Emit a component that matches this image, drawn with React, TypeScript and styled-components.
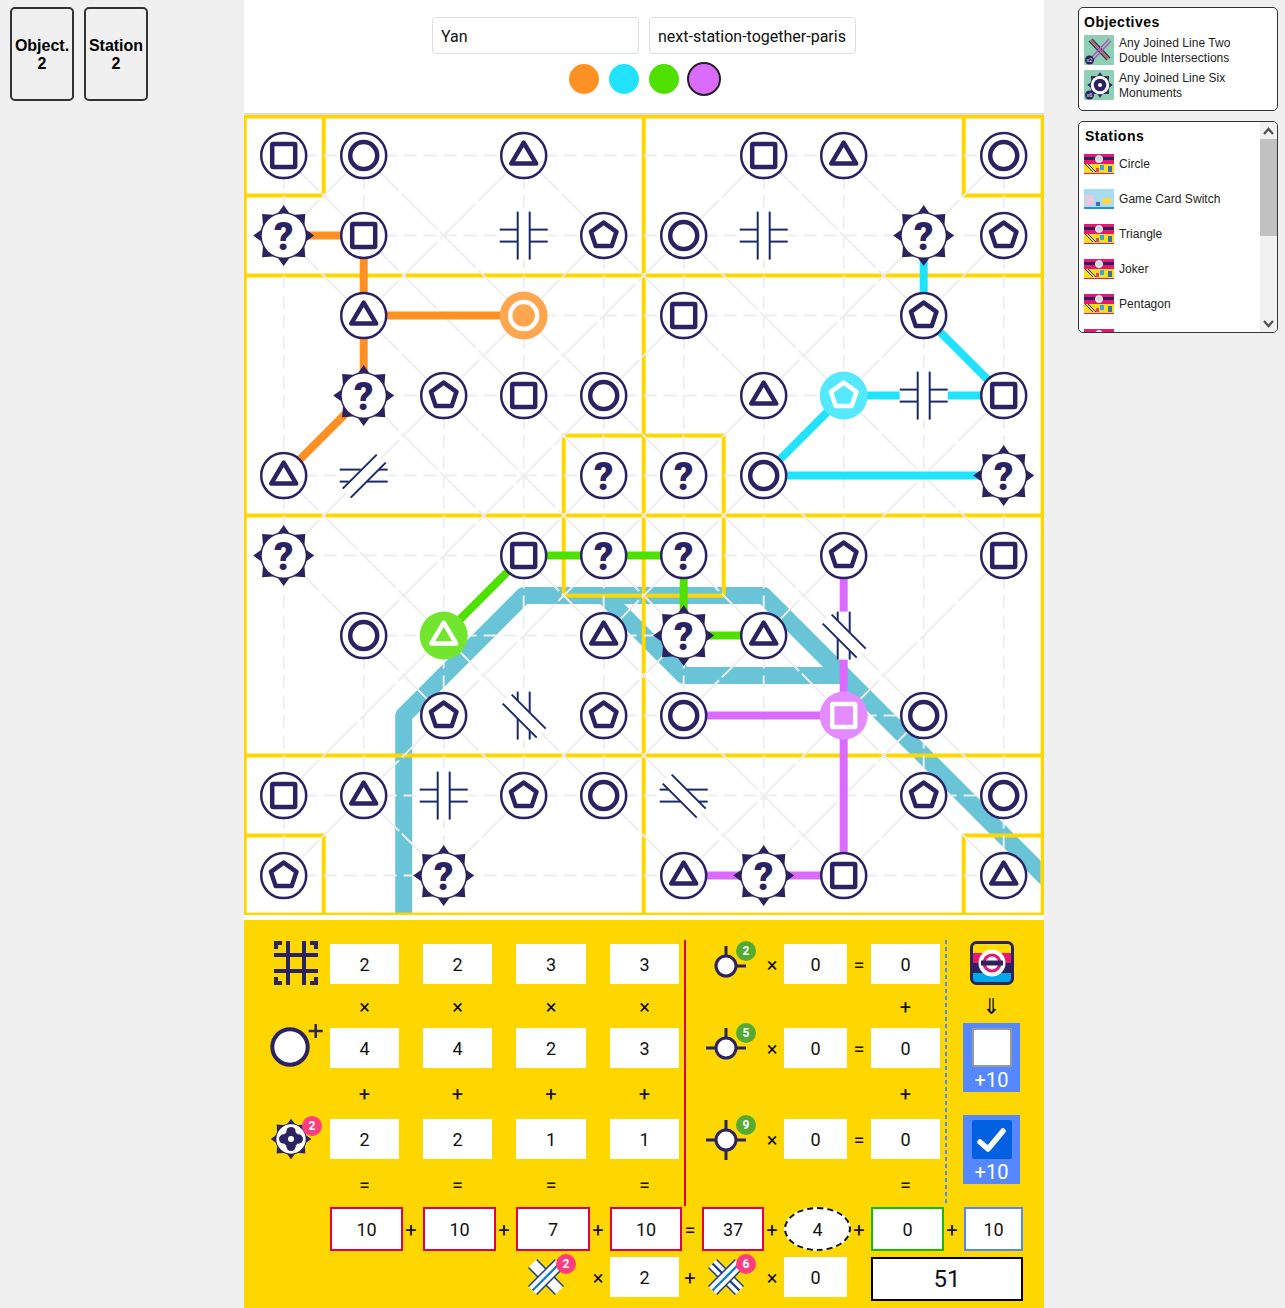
import React from "react";
import styled, { createGlobalStyle } from "styled-components";

const NAVY = "#2a2261";
const ICON_BLUE = "#1c2a6b";

const GlobalStyle = createGlobalStyle`
  html, body {
    margin: 0;
    padding: 0;
    background: #f0f0f0;
  }
`;

const Page = styled.div`
  display: flex;
  align-items: flex-start;
  width: 1285px;
  height: 1308px;
  overflow: hidden;
`;

const LeftCol = styled.div`
  width: 244px;
  box-sizing: border-box;
  padding: 7px 0 0 10px;
  display: flex;
  gap: 10px;
`;

const SideCard = styled.div`
  width: 64px;
  height: 94px;
  box-sizing: border-box;
  border: 2px solid #333;
  border-radius: 5px;
  padding-top: 2px;
  display: flex;
  align-items: center;
  justify-content: center;
  text-align: center;
  font: bold 16px/18px "Liberation Sans", Arial, sans-serif;
  color: #000;
`;

const Center = styled.div`
  width: 800px;
  background: #fff;
`;

const Header = styled.div`
  height: 115px;
  box-sizing: border-box;
  border-bottom: 2px solid #ddd;
  padding-top: 17px;
  display: flex;
  flex-direction: column;
  align-items: center;
`;

const InputRow = styled.div`
  display: flex;
  gap: 10px;
`;

const NameInput = styled.input`
  width: 207px;
  height: 37px;
  box-sizing: border-box;
  border: 1px solid #ddd;
  border-radius: 4px;
  padding: 2px 8px 0;
  font: 16px Roboto, sans-serif;
  color: #111;
  background: #fff;
  outline: none;
`;

const DotRow = styled.div`
  display: flex;
  align-items: center;
  gap: 10px;
  margin: 8px 0 0 2px;
`;

const Dot = styled.div<{ $color: string; $active?: boolean }>`
  width: 30px;
  height: 30px;
  box-sizing: content-box;
  border-radius: 50%;
  background: ${(p) => p.$color};
  border: ${(p) => (p.$active ? "2px solid #222" : "none")};
  margin-left: ${(p) => (p.$active ? "-2px" : "0")};
`;

const BoardSvg = styled.svg`
  display: block;
  width: 800px;
  height: 800px;
`;

const ScoreSheet = styled.div`
  margin-top: 5px;
  height: 388px;
  box-sizing: border-box;
  padding-top: 24px;
  background: #ffd700;
  display: grid;
  grid-template-columns: 86px 73px 20px 73px 20px 74px 20px 72px 20px 62px 20px 67px 20px 73px 20px 59px 21px;
  grid-template-rows: 40px 44px 40px 51px 40px 48px 44px 6px 40px;
  font-family: Roboto, sans-serif;
`;

const Place = styled.div<{ $c: number; $r: number }>`
  grid-column: ${(p) => p.$c};
  grid-row: ${(p) => p.$r};
`;

const ScoreInput = styled.input<{ $c: number; $r: number; $w?: number }>`
  grid-column: ${(p) => p.$c};
  grid-row: ${(p) => p.$r};
  width: ${(p) => p.$w ?? 69}px;
  height: 40px;
  box-sizing: border-box;
  border: none;
  padding: 0;
  background: #fff;
  text-align: center;
  font: 18px Roboto, sans-serif;
  color: #111;
  outline: none;
`;

const Op = styled(Place)<{ $w?: number }>`
  box-sizing: border-box;
  width: ${(p) => (p.$w ? `${p.$w}px` : "auto")};
  padding: ${(p) => (p.$r === 6 ? 4 : 1)}px ${(p) => (p.$w ? 0 : 4)}px 0 0;
  display: flex;
  align-items: center;
  justify-content: center;
  font: 20px Roboto, sans-serif;
  color: #111;
`;

const TotalBox = styled(Place)<{ $border: string }>`
  box-sizing: border-box;
  height: 44px;
  border: 2px solid ${(p) => p.$border};
  background: #fff;
  display: flex;
  align-items: center;
  justify-content: center;
  font-size: 18px;
  color: #111;
`;

const OvalBox = styled(Place)`
  box-sizing: border-box;
  height: 44px;
  border: 2px dashed #111;
  border-radius: 50%;
  background: #fff;
  display: flex;
  align-items: center;
  justify-content: center;
  font-size: 18px;
  color: #111;
`;

const GrandTotal = styled.div`
  grid-column: 14 / 17;
  grid-row: 9;
  box-sizing: border-box;
  height: 44px;
  border: 2px solid #000;
  background: #fff;
  display: flex;
  align-items: center;
  justify-content: center;
  font-size: 24px;
  color: #111;
`;

const IconSlot = styled(Place)<{ $ml: number; $mt: number }>`
  position: relative;
  margin: ${(p) => p.$mt}px 0 0 ${(p) => p.$ml}px;
  width: 48px;
  height: 44px;
  align-self: start;
`;

const Badge = styled.div<{ $color: string; $top: number; $left: number }>`
  position: absolute;
  top: ${(p) => p.$top}px;
  left: ${(p) => p.$left}px;
  width: 20px;
  height: 20px;
  border-radius: 50%;
  background: ${(p) => p.$color};
  color: #fff;
  display: flex;
  align-items: center;
  justify-content: center;
  font: bold 12px Roboto, sans-serif;
`;

const RedRule = styled.div`
  grid-column: 9;
  grid-row: 1 / 7;
  width: 2px;
  margin: -4px 0 1px 2px;
  background: #e0004d;
`;

const BlueRule = styled.div`
  grid-column: 15;
  grid-row: 1 / 7;
  width: 2px;
  margin: -4px 0 1px 1px;
  background: repeating-linear-gradient(to bottom, #5588ff 0 4px, transparent 4px 7px);
`;

const BonusCol = styled.div`
  grid-column: 16;
  grid-row: 1 / 7;
  margin: -3px 0 0 -1px;
  width: 57px;
  display: flex;
  flex-direction: column;
  align-items: center;
`;

const Arrow = styled.div`
  height: 38px;
  box-sizing: border-box;
  padding-top: 5px;
  display: flex;
  align-items: center;
  font: 22px "DejaVu Sans", sans-serif;
  color: #111;
`;

const BonusBox = styled.div`
  width: 57px;
  height: 69px;
  box-sizing: border-box;
  padding-top: 5px;
  background: #5588ff;
  display: flex;
  flex-direction: column;
  align-items: center;
  color: #fff;
  font: 20px/24px Roboto, sans-serif;
  & + & {
    margin-top: 23px;
  }
`;

const Check = styled.div<{ $on?: boolean }>`
  width: 40px;
  height: 40px;
  box-sizing: border-box;
  margin-bottom: 1px;
  border-radius: 2px;
  border: 2px solid ${(p) => (p.$on ? "#0060df" : "#9a9a9a")};
  background: ${(p) => (p.$on ? "#0060df" : "#fff")};
  display: flex;
  align-items: center;
  justify-content: center;
`;

const RightCol = styled.div`
  margin-left: 34px;
  padding-top: 7px;
  width: 200px;
  display: flex;
  flex-direction: column;
  gap: 10px;
  font-family: "Liberation Sans", Arial, sans-serif;
`;

const Panel = styled.div<{ $tall?: boolean }>`
  position: relative;
  box-sizing: border-box;
  width: 200px;
  height: ${(p) => (p.$tall ? "212px" : "104px")};
  overflow: hidden;
  border: 1px solid #333;
  border-radius: 5px;
  background: #fff;
  padding: 0 5px;
  display: flex;
  flex-direction: column;
  gap: 5px;
`;

const PanelTitle = styled.div<{ $ml?: number }>`
  flex: none;
  height: 21px;
  margin: 0 0 -5px ${(p) => p.$ml ?? 0}px;
  padding-top: 6px;
  font-size: 14px;
  font-weight: bold;
  line-height: 17px;
  letter-spacing: 0.5px;
  color: #000;
`;

const PanelRow = styled.div`
  flex: none;
  height: 30px;
  display: flex;
  align-items: center;
  gap: 5px;
  font-size: 12px;
  line-height: 15px;
  letter-spacing: 0.05px;
  color: #222;
`;

const RowText = styled.span<{ $drop?: number }>`
  padding-top: ${(p) => p.$drop ?? 0}px;
`;

const ScrollTrack = styled.div`
  position: absolute;
  top: 0;
  right: 0;
  bottom: 0;
  width: 17px;
  background: #f1f1f1;
  display: flex;
  flex-direction: column;
`;

const ScrollButton = styled.div`
  flex: none;
  height: 17px;
  display: flex;
  align-items: center;
  justify-content: center;
`;

const ScrollThumb = styled.div`
  flex: none;
  height: 97px;
  background: #c1c1c1;
`;

const ScrollGap = styled.div`
  flex: 1;
`;

type Dir = "h" | "v" | "d" | "s";

const ROWS = [
  "sc.t..st.c",
  "js.HpcH.jp",
  ".t.c.s..p.",
  ".jpsc.tpHs",
  "tA..qqc..j",
  "j..sqq.p.s",
  ".ct.tjtC..",
  "..pCpc.sc.",
  "stHpcB..pc",
  "p.j..tjs.t",
];

const STARTS: Record<string, string> = {
  "3,2": "#ffa64f",
  "7,3": "#55e9ff",
  "2,6": "#72e62e",
  "7,7": "#e38bff",
};

const BLOCKED: Record<string, Dir[]> = {
  H: ["d", "s"],
  A: ["v", "d"],
  B: ["v", "s"],
  C: ["h", "s"],
};

const LINES: { color: string; nodes: [number, number][] }[] = [
  { color: "#ff9124", nodes: [[0, 1], [1, 1], [1, 2], [3, 2]] },
  { color: "#ff9124", nodes: [[1, 2], [1, 3], [0, 4]] },
  { color: "#22e3ff", nodes: [[8, 1], [8, 2], [9, 3], [7, 3], [6, 4], [9, 4]] },
  { color: "#50e000", nodes: [[2, 6], [3, 5], [5, 5], [5, 6], [6, 6]] },
  { color: "#db6bff", nodes: [[7, 5], [7, 9], [5, 9]] },
  { color: "#db6bff", nodes: [[7, 7], [5, 7]] },
];

const px = (n: number) => 40 + 80 * n;

function buildGrid() {
  const segs: { x1: number; y1: number; x2: number; y2: number; dir: Dir }[] = [];
  const walk = (cells: [number, number][], dir: Dir) => {
    let last: [number, number] | null = null;
    for (const c of cells) {
      const k = ROWS[c[1]][c[0]];
      if (k === ".") continue;
      if (BLOCKED[k]?.includes(dir)) {
        last = null;
        continue;
      }
      if (last) segs.push({ x1: px(last[0]), y1: px(last[1]), x2: px(c[0]), y2: px(c[1]), dir });
      last = c;
    }
  };
  const idx = Array.from({ length: 10 }, (_, i) => i);
  idx.forEach((n) => {
    walk(idx.map((i) => [i, n] as [number, number]), "h");
    walk(idx.map((j) => [n, j] as [number, number]), "v");
  });
  for (let d = -9; d <= 9; d++) {
    walk(idx.filter((i) => i - d >= 0 && i - d <= 9).map((i) => [i, i - d] as [number, number]), "d");
  }
  for (let s = 0; s <= 18; s++) {
    walk(idx.filter((i) => s - i >= 0 && s - i <= 9).map((i) => [i, s - i] as [number, number]), "s");
  }
  return segs;
}

// the eight spikes round a joker: axis spikes are narrower than the corner ones
function spikes() {
  const polar = (deg: number, r: number) => {
    const t = (deg * Math.PI) / 180;
    return `${(Math.cos(t) * r).toFixed(2)},${(Math.sin(t) * r).toFixed(2)}`;
  };
  return Array.from({ length: 8 }, (_, n) => {
    const a = n * 45;
    const half = n % 2 === 0 ? 18 : 24;
    return [polar(a - half, 22), polar(a, 30.5), polar(a + half, 22)].join(" ");
  });
}

const SpikeRing = () => (
  <>
    <circle r={23.5} fill={NAVY} />
    {spikes().map((pts) => (
      <polygon key={pts} points={pts} fill={NAVY} />
    ))}
    <circle r={22} fill="#fff" />
  </>
);

const Shape = ({ kind, color, fill }: { kind: string; color: string; fill: string }) => {
  const common = { stroke: color, strokeWidth: 4.5, fill, strokeLinejoin: "round" as const };
  if (kind === "s") return <rect x={-11.5} y={-11.5} width={23} height={23} rx={1} {...common} />;
  if (kind === "c") return <circle r={13.5} {...common} />;
  if (kind === "t") return <polygon points="0,-13 12.5,8 -12.5,8" {...common} />;
  return <polygon points="0,-13 12.8,-3.8 8,10.5 -8,10.5 -12.8,-3.8" {...common} />;
};

const QuestionMark = styled.text`
  font: 900 38px Roboto, "Liberation Sans", sans-serif;
  fill: ${NAVY};
  text-anchor: middle;
`;

const CrossLines = ({ kind }: { kind: string }) => {
  const l = (x1: number, y1: number, x2: number, y2: number, key: string) => (
    <line key={key} x1={x1} y1={y1} x2={x2} y2={y2} stroke={ICON_BLUE} strokeWidth={2} />
  );
  if (kind === "H") {
    return (
      <g>
        <rect x={-7} y={-24} width={14} height={48} fill="#fff" />
        <rect x={-24} y={-7} width={48} height={14} fill="#fff" />
        {l(-6, -24, -6, 24, "a")}
        {l(6, -24, 6, 24, "b")}
        {l(-24, -6, -6, -6, "c")}
        {l(6, -6, 24, -6, "d")}
        {l(-24, 6, -6, 6, "e")}
        {l(6, 6, 24, 6, "f")}
      </g>
    );
  }
  if (kind === "C") {
    return (
      <g>
        <rect x={-7} y={-24} width={14} height={48} fill="#fff" />
        <rect x={-24} y={-7} width={48} height={14} fill="#fff" transform="rotate(45)" />
        {l(-6, -24, -6, -15, "a")}
        {l(-6, 3, -6, 24, "b")}
        {l(6, -24, 6, -3, "c")}
        {l(6, 15, 6, 24, "d")}
        {l(-21, -12, 13, 22, "e")}
        {l(-12, -21, 22, 13, "f")}
      </g>
    );
  }
  if (kind === "B") {
    return (
      <g>
        <rect x={-24} y={-7} width={48} height={14} fill="#fff" />
        <rect x={-24} y={-7} width={48} height={14} fill="#fff" transform="rotate(45)" />
        {l(-24, -6, -15, -6, "a")}
        {l(3, -6, 24, -6, "b")}
        {l(-24, 6, -3, 6, "c")}
        {l(15, 6, 24, 6, "d")}
        {l(-21, -12, 13, 22, "e")}
        {l(-12, -21, 22, 13, "f")}
      </g>
    );
  }
  return (
    <g>
      <rect x={-24} y={-7} width={48} height={14} fill="#fff" />
      <rect x={-24} y={-7} width={48} height={14} fill="#fff" transform="rotate(-45)" />
      {l(-24, -6, -3, -6, "a")}
      {l(15, -6, 24, -6, "b")}
      {l(-24, 6, -15, 6, "c")}
      {l(3, 6, 24, 6, "d")}
      {l(-21, 13, 13, -21, "e")}
      {l(-13, 22, 22, -13, "f")}
    </g>
  );
};

const Station = ({ kind, i, j }: { kind: string; i: number; j: number }) => {
  const halo = STARTS[`${i},${j}`];
  const at = `translate(${px(i)} ${px(j)})`;
  if ("HABC".includes(kind)) {
    return (
      <g transform={at}>
        <CrossLines kind={kind} />
      </g>
    );
  }
  if (halo) {
    return (
      <g transform={at}>
        <circle r={24} fill={halo} />
        <Shape kind={kind} color="#fff" fill={halo} />
      </g>
    );
  }
  if (kind === "j" || kind === "q") {
    return (
      <g transform={at}>
        {kind === "j" ? <SpikeRing /> : <circle r={22.5} fill="#fff" stroke={NAVY} strokeWidth={2.5} />}
        <QuestionMark y={14}>?</QuestionMark>
      </g>
    );
  }
  return (
    <g transform={at}>
      <circle r={22.5} fill="#fff" stroke={NAVY} strokeWidth={2.5} />
      <Shape kind={kind} color={NAVY} fill="none" />
    </g>
  );
};

const Board = () => {
  const grid = buildGrid();
  return (
    <BoardSvg viewBox="0 0 800 800">
      <defs>
        <clipPath id="board-clip">
          <rect x={0} y={0} width={797} height={800} />
        </clipPath>
      </defs>
      <g transform="translate(-0.3 0.6)">
        <g clipPath="url(#board-clip)" fill="none" stroke="#68c4d6" strokeWidth={17} strokeLinejoin="round">
          <polyline points="160,800 160,600 280,480 520,480 840,800" />
          <polyline points="360,480 440,560 600,560" />
        </g>
        <g stroke="#ffd700" strokeWidth={4} fill="none">
          <rect x={1} y={1} width={798} height={798} />
          <line x1={0} y1={160} x2={800} y2={160} />
          <line x1={0} y1={400} x2={800} y2={400} />
          <line x1={0} y1={640} x2={800} y2={640} />
          <line x1={400} y1={0} x2={400} y2={800} />
          <polyline points="80,0 80,80 0,80" />
          <polyline points="720,0 720,80 800,80" />
          <polyline points="0,720 80,720 80,800" />
          <polyline points="800,720 720,720 720,800" />
          <rect x={320} y={320} width={160} height={160} />
        </g>
        <g stroke="#eee" strokeWidth={2}>
          {grid.map((s, n) => (
            <line
              key={n}
              x1={s.x1}
              y1={s.y1}
              x2={s.x2}
              y2={s.y2}
              strokeDasharray={s.dir === "h" || s.dir === "v" ? "13 7" : "50 4"}
            />
          ))}
        </g>
        {LINES.map((l, n) => (
          <polyline
            key={n}
            points={l.nodes.map(([i, j]) => `${px(i)},${px(j)}`).join(" ")}
            fill="none"
            stroke={l.color}
            strokeWidth={8}
          />
        ))}
        {ROWS.map((row, j) =>
          row.split("").map((k, i) => (k === "." ? null : <Station key={`${i}-${j}`} kind={k} i={i} j={j} />)),
        )}
      </g>
    </BoardSvg>
  );
};

const HashIcon = () => (
  <svg width="44" height="44" viewBox="0 0 44 44" fill="none" stroke={NAVY} strokeWidth="4">
    <path d="M14 0V44M30 0V44M0 14H44M0 30H44" />
    <path d="M2 8V2H8M36 2H42V8M42 36V42H36M8 42H2V36" />
  </svg>
);

const PlusCircleIcon = () => (
  <svg width="54" height="48" viewBox="0 0 54 48" fill="none" stroke={NAVY}>
    <circle cx="20" cy="25" r="17.7" fill="#fff" strokeWidth="4" />
    <path d="M45.7 2V16M38.7 9H52.7" strokeWidth="2.5" />
  </svg>
);

const Monument = () => (
  <svg width="42" height="42" viewBox="-31.5 -31.5 63 63">
    <SpikeRing />
    <g fill={NAVY}>
      <circle cx={-11} r={7} />
      <circle cx={11} r={7} />
      <circle cy={-11} r={7} />
      <circle cy={11} r={7} />
      <circle r={12} />
    </g>
    <circle r={4.5} fill="#fff" />
  </svg>
);

const ArmIcon = ({ arms }: { arms: string }) => (
  <svg width="40" height="40" viewBox="-20 -20 40 40" fill="#fff" stroke={NAVY} strokeWidth="3">
    {arms.includes("u") && <line x1={0} y1={-20} x2={0} y2={-8} />}
    {arms.includes("l") && <line x1={-20} y1={0} x2={-8} y2={0} />}
    {arms.includes("r") && <line x1={8} y1={0} x2={20} y2={0} />}
    {arms.includes("d") && <line x1={0} y1={8} x2={0} y2={20} />}
    <circle r={10} />
  </svg>
);

const Band = ({ angle, stripe }: { angle: number; stripe?: string }) => (
  <g transform={`rotate(${angle})`}>
    <rect x={-6} y={-20} width={12} height={40} fill="#fff" />
    <line x1={-6} y1={-20} x2={-6} y2={20} stroke="#1c3f8c" strokeWidth={1.6} />
    <line x1={6} y1={-20} x2={6} y2={20} stroke="#1c3f8c" strokeWidth={1.6} />
    {stripe && <line x1={0} y1={-20} x2={0} y2={20} stroke={stripe} strokeWidth={2.4} />}
  </g>
);

const CrossIcon = ({ both }: { both?: boolean }) => (
  <svg width="40" height="40" viewBox="-21 -21 42 42">
    <Band angle={-45} stripe={both ? "#1c3f8c" : undefined} />
    <Band angle={45} stripe="#0f7bd8" />
  </svg>
);

const LogoIcon = () => (
  <svg width="44" height="44" viewBox="0 0 44 44">
    <rect x={1} y={1} width={42} height={42} rx={5} fill="#fff" />
    <clipPath id="logo-clip">
      <rect x={1} y={1} width={42} height={42} rx={5} />
    </clipPath>
    <g clipPath="url(#logo-clip)">
      <rect x={0} y={0} width={44} height={12} fill="#ffdd00" />
      <rect x={0} y={12} width={44} height={10} fill="#e6186f" />
      <rect x={0} y={22} width={44} height={10} fill={NAVY} />
      <rect x={0} y={32} width={44} height={12} fill="#00a8e8" />
    </g>
    <rect x={1.5} y={1.5} width={41} height={41} rx={5} fill="none" stroke={NAVY} strokeWidth={3} />
    <circle cx={22} cy={22} r={13.5} fill="#fff" />
    <circle cx={22} cy={22} r={8} fill="none" stroke="#e6186f" strokeWidth={3} />
    <rect x={11} y={19.5} width={22} height={5} fill={NAVY} />
  </svg>
);

const Tick = () => (
  <svg width="32" height="32" viewBox="0 0 32 32" fill="none" stroke="#fff" strokeWidth="5.5" strokeLinecap="round" strokeLinejoin="round">
    <polyline points="4,18 12,25 27,7" />
  </svg>
);

const Chevron = ({ up }: { up?: boolean }) => (
  <svg width="11" height="8" viewBox="0 0 11 8" fill="none" stroke="#505050" strokeWidth="2.2">
    <polyline points={up ? "1,7 5.5,2 10,7" : "1,1 5.5,6 10,1"} />
  </svg>
);

const ObjectiveThumb = ({ kind, count }: { kind: "cross" | "monument"; count: string }) => (
  <svg width="30" height="30" viewBox="0 0 30 30" style={{ flex: "none" }}>
    <rect width="30" height="30" rx="1" fill="#8fcfb4" />
    {kind === "cross" ? (
      <g strokeWidth="1.5">
        <path d="M8 4L26 23M5 6L23 25" stroke="#333a74" />
        <path d="M6.5 5L24.5 24" stroke="#e05a3a" />
        <path d="M25 4L7 23M27 6L9 25" stroke="#a65bb5" />
      </g>
    ) : (
      <g transform="translate(16 15) scale(0.42)">
        <SpikeRing />
        <circle r={15} fill={NAVY} />
        <circle r={5} fill="#fff" />
      </g>
    )}
    <circle cx="5.5" cy="25" r="4.5" fill={NAVY} />
    <text x="5.5" y="27" fontSize="5.5" fill="#fff" textAnchor="middle" fontFamily="Liberation Sans">
      {count}
    </text>
  </svg>
);

const StationThumb = ({ alt }: { alt?: boolean }) =>
  alt ? (
    <svg width="30" height="20" viewBox="0 0 30 20" style={{ flex: "none" }}>
      <rect width="30" height="20" fill="#a9dcf2" />
      <rect x="1" y="6" width="9" height="11" fill="#e8c8dc" />
      <rect x="18" y="9" width="9" height="6" fill="#ffd84a" />
      <rect x="12" y="13" width="4" height="4" fill="#3a6fb0" />
      <rect y="18" width="30" height="2" fill="#1a9ad6" />
    </svg>
  ) : (
    <svg width="30" height="20" viewBox="0 0 30 20" style={{ flex: "none" }}>
      <rect width="30" height="10" fill="#e6186f" />
      <rect y="3" width="30" height="3" fill={NAVY} />
      <rect y="10" width="30" height="10" fill="#f5e020" />
      <rect y="19" width="30" height="1" fill="#e6186f" />
      <circle cx="15" cy="5" r="3.5" fill="#d8d8e0" stroke="#fff" />
      <path d="M1 10L9 18M4 10L12 18" stroke={NAVY} />
      <rect x="16" y="11" width="4" height="5" fill="#3aa6dc" />
      <rect x="24" y="12" width="4" height="6" fill="#3a6fb0" />
      <rect x="12" y="14" width="3" height="4" fill="#d84a6a" />
    </svg>
  );

const STATION_ROWS = ["Circle", "Game Card Switch", "Triangle", "Joker", "Pentagon", ""];

const COLS = [2, 4, 6, 8];
const TABLE = [
  [2, 2, 3, 3],
  [4, 4, 2, 3],
  [2, 2, 1, 1],
];
const WIDTHS = [69, 69, 70, 69];

const v = (n: number | string) => ({ value: String(n), readOnly: true });

const App = () => {
  return (
    <Page>
      <GlobalStyle />
      <LeftCol>
        <SideCard>
          Object.
          <br />2
        </SideCard>
        <SideCard>
          Station
          <br />2
        </SideCard>
      </LeftCol>
      <Center>
        <Header>
          <InputRow>
            <NameInput {...v("Yan")} />
            <NameInput {...v("next-station-together-paris")} />
          </InputRow>
          <DotRow>
            <Dot $color="#ff9124" />
            <Dot $color="#22e3ff" />
            <Dot $color="#50e000" />
            <Dot $color="#db6bff" $active />
          </DotRow>
        </Header>
        <Board />
        <ScoreSheet>
          <IconSlot $c={1} $r={1} $ml={30} $mt={-3}>
            <HashIcon />
          </IconSlot>
          <IconSlot $c={1} $r={3} $ml={26} $mt={-6}>
            <PlusCircleIcon />
          </IconSlot>
          <IconSlot $c={1} $r={5} $ml={26} $mt={-1}>
            <Monument />
            <Badge $color="#ff3d80" $top={-2} $left={32}>
              2
            </Badge>
          </IconSlot>

          {TABLE.map((row, r) =>
            row.map((n, c) => <ScoreInput key={`${r}-${c}`} $c={COLS[c]} $r={r * 2 + 1} $w={WIDTHS[c]} {...v(n)} />),
          )}
          {COLS.map((c, n) => (
            <React.Fragment key={c}>
              <Op $c={c} $r={2} $w={WIDTHS[n]}>
                ×
              </Op>
              <Op $c={c} $r={4} $w={WIDTHS[n]}>
                +
              </Op>
              <Op $c={c} $r={6} $w={WIDTHS[n]}>
                =
              </Op>
            </React.Fragment>
          ))}

          <RedRule />

          {[
            { r: 1, arms: "ur", n: 2, mt: 2 },
            { r: 3, arms: "url", n: 5, mt: 0 },
            { r: 5, arms: "urld", n: 9, mt: 1 },
          ].map((row) => (
            <React.Fragment key={row.r}>
              <IconSlot $c={10} $r={row.r} $ml={4} $mt={row.mt}>
                <ArmIcon arms={row.arms} />
                <Badge $color="#53ab33" $top={-5} $left={30}>
                  {row.n}
                </Badge>
              </IconSlot>
              <Op $c={11} $r={row.r}>
                ×
              </Op>
              <ScoreInput $c={12} $r={row.r} $w={63} {...v(0)} />
              <Op $c={13} $r={row.r}>
                =
              </Op>
              <ScoreInput $c={14} $r={row.r} {...v(0)} />
            </React.Fragment>
          ))}
          <Op $c={14} $r={2} $w={69}>
            +
          </Op>
          <Op $c={14} $r={4} $w={69}>
            +
          </Op>
          <Op $c={14} $r={6} $w={69}>
            =
          </Op>

          <BlueRule />

          <BonusCol>
            <LogoIcon />
            <Arrow>⇓</Arrow>
            <BonusBox>
              <Check />
              +10
            </BonusBox>
            <BonusBox>
              <Check $on>
                <Tick />
              </Check>
              +10
            </BonusBox>
          </BonusCol>

          <TotalBox $c={2} $r={7} $border="#e0004d">
            10
          </TotalBox>
          <Op $c={3} $r={7}>
            +
          </Op>
          <TotalBox $c={4} $r={7} $border="#e0004d">
            10
          </TotalBox>
          <Op $c={5} $r={7}>
            +
          </Op>
          <TotalBox $c={6} $r={7} $border="#e0004d">
            7
          </TotalBox>
          <Op $c={7} $r={7}>
            +
          </Op>
          <TotalBox $c={8} $r={7} $border="#e0004d">
            10
          </TotalBox>
          <Op $c={9} $r={7}>
            =
          </Op>
          <TotalBox $c={10} $r={7} $border="#e0004d">
            37
          </TotalBox>
          <Op $c={11} $r={7}>
            +
          </Op>
          <OvalBox $c={12} $r={7}>
            4
          </OvalBox>
          <Op $c={13} $r={7}>
            +
          </Op>
          <TotalBox $c={14} $r={7} $border="#10c000">
            0
          </TotalBox>
          <Op $c={15} $r={7}>
            +
          </Op>
          <TotalBox $c={16} $r={7} $border="#5588ff">
            10
          </TotalBox>

          <IconSlot $c={6} $r={9} $ml={10} $mt={0}>
            <CrossIcon />
            <Badge $color="#ff3d80" $top={-3} $left={30}>
              2
            </Badge>
          </IconSlot>
          <Op $c={7} $r={9}>
            ×
          </Op>
          <ScoreInput $c={8} $r={9} {...v(2)} />
          <Op $c={9} $r={9}>
            +
          </Op>
          <IconSlot $c={10} $r={9} $ml={4} $mt={0}>
            <CrossIcon both />
            <Badge $color="#ff3d80" $top={-3} $left={30}>
              6
            </Badge>
          </IconSlot>
          <Op $c={11} $r={9}>
            ×
          </Op>
          <ScoreInput $c={12} $r={9} $w={63} {...v(0)} />
          <GrandTotal>51</GrandTotal>
        </ScoreSheet>
      </Center>
      <RightCol>
        <Panel>
          <PanelTitle>Objectives</PanelTitle>
          <PanelRow>
            <ObjectiveThumb kind="cross" count="x2" />
            <RowText $drop={2}>
              Any Joined Line Two
              <br />
              Double Intersections
            </RowText>
          </PanelRow>
          <PanelRow>
            <ObjectiveThumb kind="monument" count="x6" />
            <RowText $drop={2}>
              Any Joined Line Six
              <br />
              Monuments
            </RowText>
          </PanelRow>
        </Panel>
        <Panel $tall>
          <PanelTitle $ml={1}>Stations</PanelTitle>
          {STATION_ROWS.map((name, n) => (
            <PanelRow key={n}>
              <StationThumb alt={name === "Game Card Switch"} />
              {name && <RowText>{name}</RowText>}
            </PanelRow>
          ))}
          <ScrollTrack>
            <ScrollButton>
              <Chevron up />
            </ScrollButton>
            <ScrollThumb />
            <ScrollGap />
            <ScrollButton>
              <Chevron />
            </ScrollButton>
          </ScrollTrack>
        </Panel>
      </RightCol>
    </Page>
  );
};

export default App;
